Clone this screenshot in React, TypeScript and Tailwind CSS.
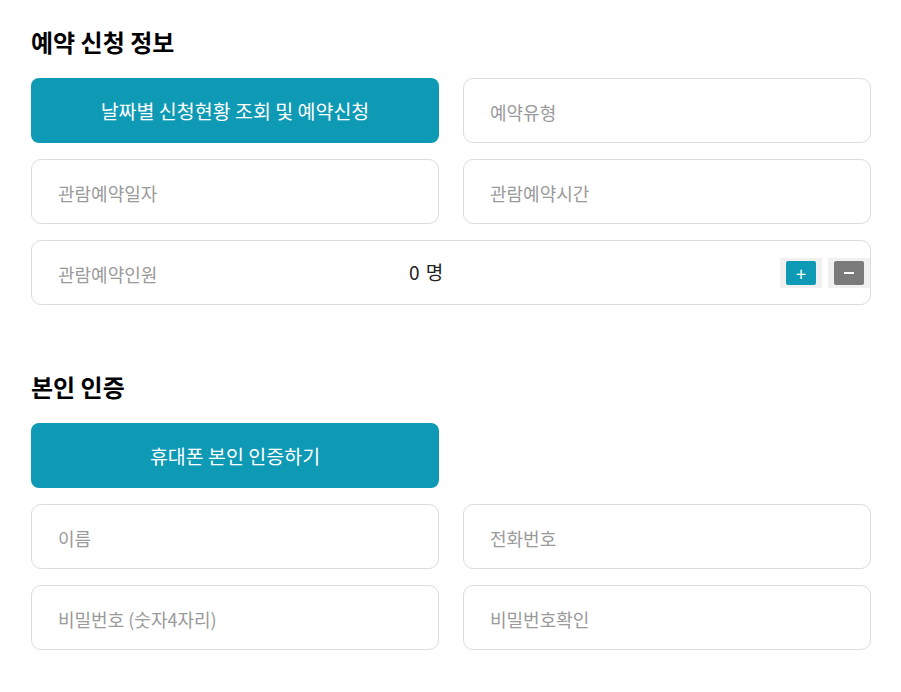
const font = "font-['Noto_Sans_CJK_KR','Noto_Sans',sans-serif]";

const Field = ({ label }: { label: string }) => (
  <div className="h-[65px] rounded-[10px] border border-[#dcdcdc] bg-white flex items-center pl-[26px] pt-[3px] text-[18px] text-[#9a9a9a]">
    {label}
  </div>
);

const ActionButton = ({ text }: { text: string }) => (
  <button className="h-[65px] w-full rounded-[8px] bg-[#0e9ab5] text-white text-[19.5px] flex items-center justify-center">
    {text}
  </button>
);

export default function App() {
  return (
    <div className={`${font} w-[901px] min-h-[692px] bg-white px-[31px] pt-[26px]`}>
      <h2 className="text-[24px] font-bold leading-[32px] text-black">예약 신청 정보</h2>
      <div className="mt-[20px] grid grid-cols-2 gap-x-[24px] gap-y-[16px] w-[840px]">
        <ActionButton text="날짜별 신청현황 조회 및 예약신청" />
        <Field label="예약유형" />
        <Field label="관람예약일자" />
        <Field label="관람예약시간" />
        <div className="col-span-2 h-[65px] rounded-[10px] border border-[#dcdcdc] bg-white flex items-center pl-[26px]">
          <span className="w-[351px] pt-[3px] text-[18px] text-[#9a9a9a]">관람예약인원</span>
          <span className="text-[19px] text-[#222] tracking-[1px]">0 명</span>
          <div className="ml-auto flex gap-[6px]">
            <div className="w-[42px] h-[30px] bg-[#f0f0f0] flex items-center justify-center">
              <div className="w-[30px] h-[24px] bg-[#0e9ab5] rounded-[2px] text-white text-[18px] leading-none flex items-center justify-center">+</div>
            </div>
            <div className="w-[42px] h-[30px] bg-[#f0f0f0] flex items-center justify-center">
              <div className="w-[30px] h-[24px] bg-[#7a7a7a] rounded-[2px] flex items-center justify-center">
                <div className="w-[10px] h-[2px] bg-white" />
              </div>
            </div>
          </div>
        </div>
      </div>

      <h2 className="mt-[66px] text-[24px] font-bold leading-[32px] text-black">본인 인증</h2>
      <div className="mt-[20px] grid grid-cols-2 gap-x-[24px] gap-y-[16px] w-[840px]">
        <ActionButton text="휴대폰 본인 인증하기" />
        <div />
        <Field label="이름" />
        <Field label="전화번호" />
        <Field label="비밀번호 (숫자4자리)" />
        <Field label="비밀번호확인" />
      </div>
    </div>
  );
}
